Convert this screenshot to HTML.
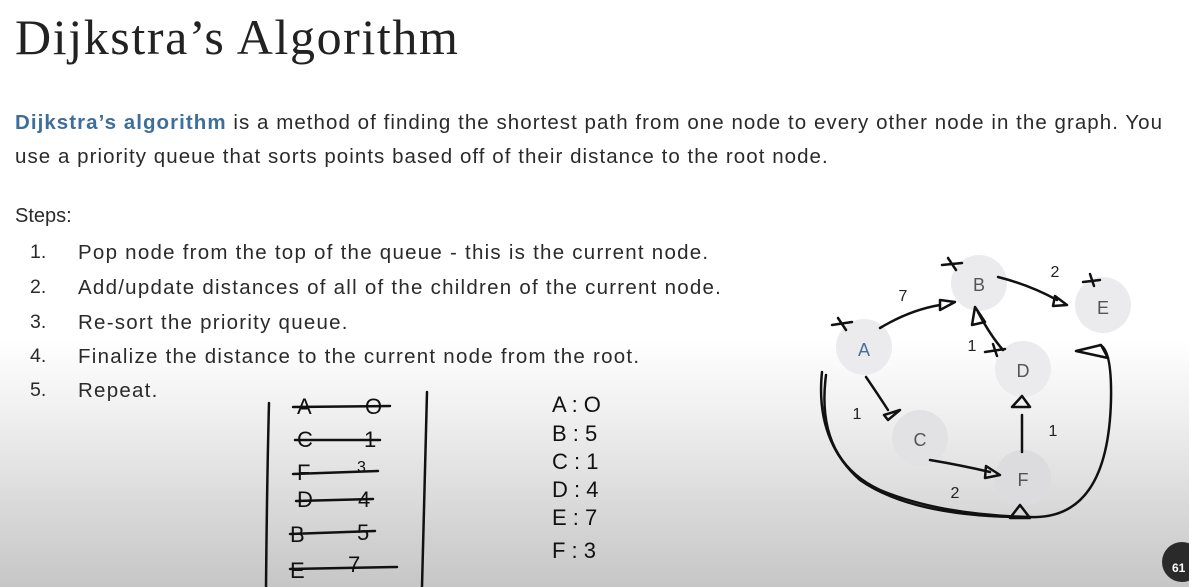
<!DOCTYPE html>
<html><head><style>
html,body{margin:0;padding:0}
body{width:1189px;height:587px;overflow:hidden;position:relative;font-family:"Liberation Sans",sans-serif;
background:linear-gradient(to bottom,#fff 0px,#fff 340px,#ececec 430px,#d6d6d6 520px,#c6c6c6 587px);}
.t{position:absolute;left:15px;top:8px;font-family:"Liberation Serif",serif;font-size:50px;color:#222;letter-spacing:1.6px}
.p{position:absolute;left:15px;top:106px;font-size:20.5px;letter-spacing:1.05px;line-height:34px;color:#2a2a2a;width:1175px;white-space:nowrap}
.p b{color:#3e6e9c;font-weight:bold}
.s{position:absolute;left:15px;top:205px;font-size:20px;color:#2a2a2a}
.li{position:absolute;left:30px;font-size:19.5px;color:#2a2a2a}
.li span{position:absolute;left:48px;white-space:nowrap;font-size:20.5px;letter-spacing:1.25px}
svg{position:absolute;left:0;top:0}
</style></head><body>
<div class="t">Dijkstra’s Algorithm</div>
<div class="p"><b>Dijkstra’s algorithm</b> is a method of finding the shortest path from one node to every other node in the graph. You<br>use a priority queue that sorts points based off of their distance to the root node.</div>
<div class="s">Steps:</div>
<div class="li" style="top:241px">1.<span>Pop node from the top of the queue - this is the current node.</span></div>
<div class="li" style="top:276px">2.<span>Add/update distances of all of the children of the current node.</span></div>
<div class="li" style="top:311px">3.<span>Re-sort the priority queue.</span></div>
<div class="li" style="top:345px">4.<span>Finalize the distance to the current node from the root.</span></div>
<div class="li" style="top:379px">5.<span>Repeat.</span></div>
<svg width="1189" height="587" viewBox="0 0 1189 587">
<g fill="#ebebee">
<circle cx="864" cy="347" r="28"/><circle cx="979" cy="283" r="28"/><circle cx="1103" cy="305" r="28"/>
<circle cx="1023" cy="369" r="28"/><circle cx="920" cy="438" r="28" fill="#e2e2e4"/><circle cx="1023" cy="478" r="28" fill="#dcdcde"/>
</g>
<g font-family="Liberation Sans,sans-serif" font-size="18" fill="#555" text-anchor="middle">
<text x="864" y="356" fill="#4a6f95">A</text><text x="979" y="291">B</text><text x="1103" y="314">E</text>
<text x="1023" y="377">D</text><text x="920" y="446">C</text><text x="1023" y="486">F</text>
</g>
<g font-family="Liberation Sans,sans-serif" font-size="16" fill="#222" text-anchor="middle">
<text x="903" y="301">7</text><text x="1055" y="277">2</text><text x="972" y="351">1</text>
<text x="857" y="419">1</text><text x="1053" y="436">1</text><text x="955" y="498">2</text>
</g>
<g fill="none" stroke="#111" stroke-width="2.5" stroke-linecap="round" stroke-linejoin="round">
<path d="M880 328 Q910 310 940 305"/><path d="M940 300 L955 302 L940 310 Z"/>
<path d="M998 277 Q1030 285 1057 300"/><path d="M1055 296 L1067 305 L1053 306 Z"/>
<path d="M1003 350 Q990 335 978 312"/><path d="M972 325 L975 307 L985 322 Z"/>
<path d="M866 377 Q875 390 888 410"/><path d="M884 415 L900 410 L888 420 Z"/>
<path d="M930 460 Q960 465 990 472"/><path d="M986 466 L1000 475 L985 478 Z"/>
<path d="M1022 452 L1022 415"/><path d="M1012 407 L1022 396 L1030 407 Z"/>
<path d="M822 372 Q815 440 860 480 Q910 515 1015 517"/>
<path d="M826 375 Q815 460 880 490 Q940 515 1030 517 Q1108 520 1111 400 Q1112 350 1100 345"/>
<path d="M1076 351 L1101 345 L1108 358 Z"/>
<path d="M1010 518 L1020 505 L1030 518 Z"/>
<path d="M832 325 L852 322 M838 318 L846 330 M942 265 L962 263 M948 258 L956 270 M1083 282 L1100 280 M1090 274 L1094 286 M985 352 L1005 349 M993 344 L997 356"/>
<path d="M269 403 Q267 480 266 587 M427 392 Q425 480 422 587"/>
<path d="M293 407 L390 406 M295 440 L380 440 M293 474 L378 471 M296 501 L373 499 M290 534 L375 531 M290 569 L397 567"/>
</g>
<g font-family="Liberation Sans,sans-serif" fill="#111" font-size="22">
<text x="297" y="414">A</text><text x="365" y="414">O</text>
<text x="297" y="447">C</text><text x="364" y="447">1</text>
<text x="297" y="480">F</text><text x="357" y="472" font-size="16">3</text>
<text x="297" y="507">D</text><text x="358" y="507">4</text>
<text x="290" y="542">B</text><text x="357" y="540">5</text>
<text x="290" y="578">E</text><text x="348" y="572">7</text>
<text x="552" y="412">A : O</text><text x="552" y="441">B : 5</text><text x="552" y="469">C : 1</text>
<text x="552" y="497">D : 4</text><text x="552" y="525">E : 7</text><text x="552" y="558">F : 3</text>
</g>
<circle cx="1182" cy="562" r="20" fill="#2a2a2a"/>
<text x="1172" y="572" font-family="Liberation Sans,sans-serif" font-size="12" font-weight="bold" fill="#fff">61</text>
</svg>
</body></html>
